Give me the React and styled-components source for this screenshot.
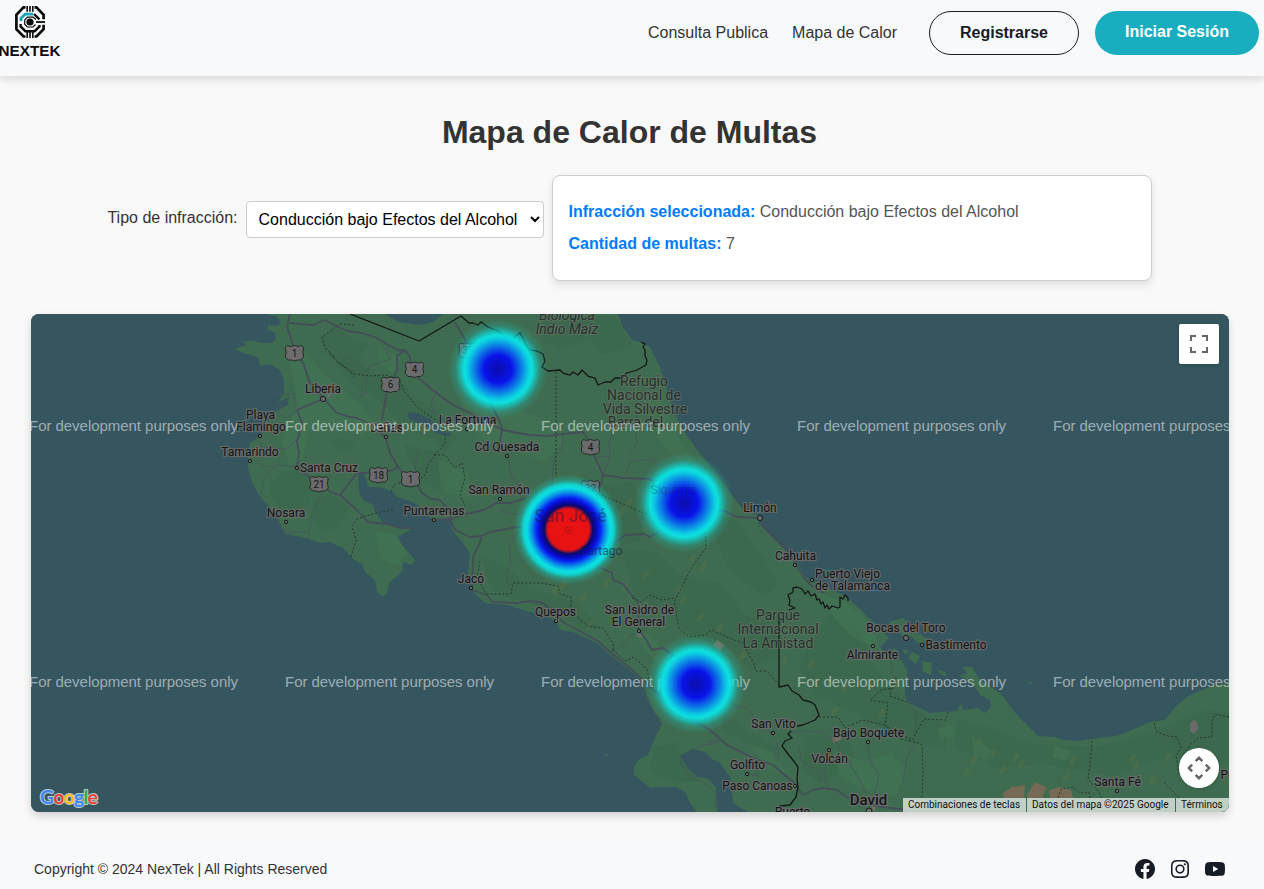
import React from "react";
import styled, { createGlobalStyle } from "styled-components";
import { BiLogoFacebookCircle, BiLogoInstagram, BiLogoYoutube } from "react-icons/bi";

const GlobalStyle = createGlobalStyle`
  *, *::before, *::after { box-sizing: border-box; }
  body {
    margin: 0;
    background: #f9f9f9;
    color: #333;
    font-family: "Liberation Sans", Arial, sans-serif;
    font-size: 16px;
  }
`;

const Page = styled.div`
  display: flex;
  flex-direction: column;
  height: 889px;
  overflow: hidden;
`;

const Header = styled.header`
  display: flex;
  justify-content: space-between;
  align-items: flex-start;
  height: 76px;
  flex: none;
  padding-right: 5px;
  background: #f8f9fb;
  box-shadow: 0 4px 8px rgba(0, 0, 0, 0.12);
`;

const LogoMark = styled.svg`
  display: block;
  width: 62px;
  height: 60px;
`;

const Nav = styled.nav`
  display: flex;
  align-items: center;
  height: 44px;
  margin-top: 11px;
`;

const NavLink = styled.a`
  margin-right: ${(p) => p.$gap}px;
  color: #333;
  line-height: 20px;
`;

const PillButton = styled.button`
  width: ${(p) => p.$width}px;
  height: 44px;
  padding: 0 0 ${(p) => (p.$primary ? 3 : 1)}px;
  border: ${(p) => (p.$primary ? "none" : "1px solid #161b26")};
  border-radius: 22px;
  background: ${(p) => (p.$primary ? "#1aadc0" : "transparent")};
  color: ${(p) => (p.$primary ? "#fff" : "#161b26")};
  font: bold 16px "Liberation Sans", Arial, sans-serif;
  & + & { margin-left: 16px; }
`;

const Main = styled.main`
  width: 1260px;
  flex: none;
  padding: 0 31px 24px;
`;

const Title = styled.h1`
  margin: 38px 1px 25px 0;
  text-align: center;
  font-size: 32px;
  line-height: 36px;
  color: #333;
`;

const Filters = styled.div`
  display: flex;
  justify-content: center;
  align-items: flex-start;
  height: 106px;
  padding-right: 1px;
`;

const FieldLabel = styled.label`
  margin: 34px 8px 0 0;
  line-height: 18px;
`;

const Select = styled.select`
  width: 298px;
  height: 37px;
  margin: 26px 8px 0 0;
  padding: 8px;
  border: 1px solid #ccc;
  border-radius: 4px;
  background: #fff;
  color: #000;
  font: 16px "Liberation Sans", Arial, sans-serif;
`;

const InfoCard = styled.section`
  width: 600px;
  height: 106px;
  padding: 20px 16px;
  border: 1px solid #ccc;
  border-radius: 8px;
  background: #fff;
  box-shadow: 0 4px 8px rgba(0, 0, 0, 0.1);
`;

const InfoLine = styled.p`
  margin: 0;
  line-height: 32px;
  color: #555;
  strong { color: #007bff; }
`;

const MapFrame = styled.section`
  position: relative;
  height: 498px;
  margin-top: 33px;
  border-radius: 8px;
  overflow: hidden;
  background: #35565f;
`;

const MapShadow = styled.div`
  border-radius: 8px;
  box-shadow: 0 4px 8px rgba(0, 0, 0, 0.16);
`;

const MapDrawing = styled.svg`
  display: block;
  width: 1198px;
  height: 498px;
`;

const MapControl = styled.button`
  position: absolute;
  right: 10px;
  top: ${(p) => p.$top}px;
  display: flex;
  align-items: center;
  justify-content: center;
  width: 40px;
  height: 40px;
  padding: 0;
  border: 0;
  border-radius: ${(p) => (p.$round ? "50%" : "2px")};
  background: #fff;
  box-shadow: 0 1px 4px -1px rgba(0, 0, 0, 0.3);
`;

const Attribution = styled.div`
  position: absolute;
  right: 0;
  bottom: 0;
  display: flex;
  gap: 1px;
  height: 14px;
`;

const AttributionItem = styled.span`
  width: ${(p) => p.$width}px;
  padding-left: 5px;
  background: rgba(245, 245, 245, 0.72);
  color: #111;
  font: 10px/14px Roboto, sans-serif;
  white-space: nowrap;
`;

const Footer = styled.footer`
  display: flex;
  justify-content: space-between;
  align-items: center;
  flex: 1;
  padding: 13px 37px 0 34px;
  background: #f8f9fb;
  font-size: 14px;
`;

const SocialLinks = styled.div`
  display: flex;
  gap: 11px;
  color: #161b26;
`;

const LAND =
  "M267 314L277 317 281 322 278 326 268 325 267 329 275 333 276 339 272 343 260 343 255 341 243 341 247 345 235 349 243 353 258 357 260 366 270 364 280 370 284 380 284 393 278 403 282 400 288 398 288 405 278 410 275 413 270 420 263 425 260 437 250 443 248 453 248 468 252 482 260 497 270 507 278 520 285 534 307 538 320 543 330 542 343 548 353 559 362 564 365 572 375 580 377 592 382 596 386 595 390 582 402 572 403 562 412 565 415 560 402 545 398 537 413 528 397 528 383 523 375 512 373 505 363 500 359 492 358 472 363 472 365 477 369 487 380 487 393 492 397 497 413 502 425 510 430 518 450 521 452 530 463 543 470 553 468 575 473 592 485 603 507 605 530 612 547 615 557 623 560 630 573 632 597 643 610 655 627 668 643 682 647 697 653 710 662 723 655 738 648 755 638 760 634 768 634 775 650 788 655 787 677 787 685 792 690 803 697 812 717 812 716 787 707 778 697 777 687 767 680 756 692 749 705 752 712 759 720 763 730 777 733 803 748 812 1229 812 1229 682 1210 687 1190 695 1177 705 1165 720 1150 722 1120 735 1093 739 1077 741 1063 740 1055 737 1038 736 1017 715 1000 693 980 680 972 667 963 667 967 674 960 675 975 687 980 695 990 700 991 707 985 713 978 708 963 710 961 703 957 711 930 713 907 702 905 693 907 670 901 660 890 657 880 647 889 638 878 627 863 612 847 597 817 583 805 577 797 563 785 550 767 532 758 523 760 517 742 508 733 497 720 477 697 450 683 430 673 410 667 390 662 373 655 357 650 347 640 342 632 340 623 327 618 314Z";

const LAKES = [
  "M385 314L398 322 420 325 433 322 443 314Z",
  "M407 412L418 413 430 419 442 432 451 433 449 437 436 433 424 425 409 419Z",
  "M281 401L290 397 287 403 280 407Z",
];

const ISLANDS = [
  "M889 622L903 618 910 625 917 636 904 637 896 630Z",
  "M911 636L920 634 932 642 918 643Z",
  "M912 652L920 656 916 664 908 658Z",
  "M922 661L932 663 931 675 923 672Z",
  "M937 669L945 672 947 677 940 674Z",
  "M902 649L909 651 905 655Z",
  "M893 648L898 650 897 654 892 653Z",
  "M1028 683L1032 684 1030 681Z",
  "M605 754L609 754 606 756Z",
];

const DARK_PATCHES = [
  "M320 337L338 328 354 340 370 344 359 357 370 379 350 372 338 360 324 353Z",
  "M328 442L340 437 352 442 355 450 339 452Z",
  "M270 484L283 472 302 470 313 482 309 503 296 514 281 510 272 498Z",
  "M313 501L332 493 349 507 339 527 323 534 312 520Z",
  "M336 362L349 356 381 377 401 379 415 398 440 412 457 439 445 452 426 436 400 423 380 401 350 384Z",
  "M403 445L436 452 452 472 443 492 420 481Z",
  "M545 316L615 316 634 348 602 354 588 339 560 351 543 341Z",
  "M580 474L604 486 631 481 645 511 640 541 614 546 597 506Z",
  "M621 548L658 552 681 575 720 583 744 614 776 627 777 658 749 668 725 645 694 637 662 610 635 596Z",
  "M481 555L507 567 529 588 575 601 601 630 580 627 547 609 515 599 491 590Z",
  "M705 512L735 520 759 551 778 583 766 598 728 569Z",
  "M655 747L676 742 684 758 697 781 673 783 649 772Z",
  "M830 613L860 628 873 665 906 704 944 725 947 751 901 739 856 714 815 696 798 665Z",
  "M958 719L993 728 1034 744 1096 747 1155 731 1206 709 1229 713 1229 762 1161 758 1113 776 1043 764 997 768 954 748Z",
  "M724 716L756 735 782 749 778 761 747 744 721 730Z",
  "M805 735L850 738 854 763 822 783 803 772Z",
];

const LIGHT_PATCHES = [
  "M289 356L306 352 326 376 361 404 374 425 362 437 334 423 309 430 303 458 289 466 282 438 298 405Z",
  "M378 347L402 358 393 374 379 363Z",
  "M459 400L505 405 546 420 566 438 545 462 516 451 482 440Z",
  "M438 459L468 473 471 500 441 491Z",
  "M645 390L663 401 678 437 705 477 684 470 658 437Z",
  "M375 531L395 534 407 553 397 566 381 559Z",
  "M634 630L651 635 675 668 661 671 645 649Z",
  "M815 592L844 601 873 626 879 649 852 637 831 614Z",
  "M833 749L864 762 892 752 908 770 895 796 863 789 839 776Z",
  "M937 728L953 726 955 737 941 739Z",
  "M971 735L991 750 988 762 974 755Z",
  "M1055 746L1072 751 1066 761 1052 757Z",
  "M750 744L771 751 789 774 771 772Z",
];

const RELIEF = [
  [655, 472], [663, 490], [626, 503], [619, 512], [690, 558], [700, 567], [643, 574], [604, 583],
  [552, 590], [580, 598], [587, 625], [676, 590], [680, 600], [716, 628], [741, 655], [781, 661],
  [783, 645], [724, 664], [738, 656], [808, 665], [827, 681], [832, 711], [842, 688], [879, 713],
  [976, 742], [990, 754], [971, 760], [1013, 758], [1018, 764], [1063, 778], [1129, 759], [1150, 780],
  [1165, 757], [1133, 765], [1070, 760], [1000, 770], [963, 772], [622, 588], [560, 586], [697, 618],
];

const MAIN_ROADS = [
  "M290 314L287 327 293 345 303 363 310 383 323 398 337 413 350 417 357 418 372 425 385 437 388 446 390 453 398 467 405 475 417 483 422 493 431 499 440 500 447 508 451 517 450 520 455 530 470 537 481 536 490 532 517 527 545 530 569 530 589 541 597 566 612 573 613 580 623 584 630 593 638 602 639 630 645 638 652 650 663 648 674 656 695 682",
  "M290 323L313 325 325 320 338 327 348 331 362 333 377 338 390 346 398 350 405 350 410 357 413 373 430 388 453 405 470 413 490 424 503 430 518 433 530 435 547 436 563 434 583 432 591 443 593 453 603 475 623 478 650 479 663 490 684 502 717 510 725 511 737 517 760 518",
  "M405 350L397 356 397 370 387 390 382 420",
  "M455 322L465 340 474 350 488 397 502 427 500 443",
  "M323 399L297 410 302 423 297 442 299 453 297 467",
  "M299 469L309 477 319 482 330 492 340 495 350 482 357 473 378 473 390 471 398 467",
  "M340 495L357 510 368 522 387 524 400 528 413 528",
  "M432 520L452 519 466 514 484 510 496 503 510 503 526 498",
  "M482 537L478 547 473 557 472 590 487 595 493 602 517 603 530 601 543 603 563 622 587 635 598 641 610 652 630 668 643 680 660 696 690 718 710 730 727 745 753 758 773 765 793 782 799 790 803 795 813 790 823 788 837 790 847 797 865 804 883 807 907 810",
  "M760 518L767 530 787 550 795 563 805 579 812 586 824 593",
  "M604 546L617 541 625 535 645 534 650 537 664 529",
  "M603 475L601 485 588 502 569 525",
];

const MINOR_ROADS = [
  "M274 393L285 395 294 393 295 412 287 418 279 413 281 404",
  "M260 434L260 446 269 448 286 449 293 443 302 435",
  "M256 460L262 466 272 467 278 465 297 467",
  "M276 466L264 478 262 489 261 498 275 514 284 532 308 532 309 539",
  "M322 492L316 505 312 513 309 532",
  "M384 348L391 359 369 366 366 378 362 386 361 397 366 391 368 379",
  "M437 390L431 403 434 414",
  "M417 453L414 478 421 492",
  "M508 458L511 474 518 486 530 497",
  "M563 434L562 448 554 458 552 483",
  "M603 475L610 457 594 456",
  "M610 457L609 443 614 426",
  "M626 476L630 462 643 460 654 459 657 466 645 475 642 480",
  "M630 452L637 443 634 424 638 414",
  "M500 510L515 515 532 510",
  "M518 530L509 548 511 563 506 575 509 589",
  "M609 652L620 648 633 633",
  "M707 742L721 740 727 745",
  "M693 750L702 745 713 744 721 741",
  "M681 755L681 764 691 777 703 782 716 792 715 808",
  "M727 700L738 707 747 708 753 715 753 726 770 732 777 742 778 761",
  "M788 733L803 731 820 732 835 741 843 752 860 781 872 805",
  "M829 750L824 773 828 788",
  "M868 744L870 761 879 775 872 803",
  "M799 748L802 761 821 773 819 782",
  "M890 657L895 688 910 704 916 713 915 744 907 758 903 780",
  "M760 774L752 776 759 771",
  "M765 518L758 528 765 534",
];

const DISTRICTS = [
  "M354 325L340 324 322 337 325 347 336 361 348 369 354 377",
  "M330 353L341 365 354 374 370 376 385 375 399 379 404 391 417 407 434 419 445 428 445 444 434 456 427 466 426 474 418 481 406 480 394 485 390 494",
  "M434 455L445 455 455 468 462 463 465 478 460 495 465 506",
  "M351 557L356 540 352 526 357 519 376 513 393 510",
  "M556 372L556 477",
  "M480 561L477 577 486 594 511 594 513 583 541 583 558 586 560 594 571 597 571 612 588 626 603 628 613 643 613 650",
  "M613 650L625 661 634 657 647 669 650 684",
  "M590 490L623 504 658 519 687 522",
  "M705 532L706 548 692 567 674 602 679 628 689 637 705 635 712 630 729 638 743 643 754 664 756 671 767 671 779 685",
  "M632 598L641 602 650 595 661 600 674 598",
  "M819 717L838 717 845 728 862 720 885 725 900 739 918 743 922 745 923 773 922 798",
  "M948 712L946 720 924 719 912 740 885 726 888 703 870 700 881 690 894 688 896 677",
  "M907 702L890 696 892 680",
  "M1154 723L1157 732 1168 736 1177 737 1181 748 1176 756 1179 774",
  "M1229 717L1215 714 1212 722 1212 737 1198 738 1190 745 1182 757",
  "M1092 741L1090 766 1088 779 1099 792 1104 805",
  "M1164 782L1179 798",
  "M1058 798L1061 789 1073 787 1080 793 1089 792 1090 798",
];

const BORDERS = [
  "M350 314L419 341 461 316 469 323 473 323 478 325 481 322 488 327 498 331 505 337 513 338 520 333 524 340 526 345 530 350 537 351 543 354 545 361 542 367 548 371 560 370 563 373 570 375 573 372 578 375 582 370 588 376 595 378 598 385 605 382 611 382 615 378 621 378 627 373 637 370 646 365 647 360 645 356 645 350 643 347 645 344 641 342",
  "M848 601L848 598 845 595 843 599 840 597 840 607 838 608 832 606 829 609 827 605 825 608 823 602 821 604 819 599 817 600 815 594 811 596 808 591 805 594 802 589 797 587 793 588 793 592 788 595 790 601 789 605 795 608 789 610",
  "M779 615L779 687 784 686 788 685 792 691 799 695 803 700 811 702 815 705 819 715 815 720 803 725 797 726",
  "M791 731L788 734 792 738 785 741 782 746 788 754 793 760 798 767 797 779 798 787 796 797 790 805 780 806 777 809",
];

const LABELS = [
  [323, 393, "Liberia"],
  [260.5, 419, "Playa"],
  [261, 431, "Flamingo"],
  [250, 456, "Tamarindo"],
  [329, 472, "Santa Cruz"],
  [286, 517, "Nosara"],
  [386, 432, "Cañas"],
  [467.5, 424, "La Fortuna"],
  [507, 451, "Cd Quesada"],
  [499, 494, "San Ramón"],
  [434, 515, "Puntarenas"],
  [471, 583, "Jacó"],
  [555.5, 616, "Quepos"],
  [639.5, 614, "San Isidro de"],
  [638.5, 626, "El General"],
  [760, 512, "Limón"],
  [795.5, 560, "Cahuita"],
  [847.5, 578, "Puerto Viejo"],
  [852.5, 590, "de Talamanca"],
  [906, 632, "Bocas del Toro"],
  [956, 649, "Bastimento"],
  [872.5, 659, "Almirante"],
  [773.5, 728, "San Vito"],
  [868.5, 737, "Bajo Boquete"],
  [829.5, 763, "Volcán"],
  [747.5, 769, "Golfito"],
  [757.5, 790, "Paso Canoas"],
  [792.5, 816, "Puerto"],
  [1117.5, 786, "Santa Fé"],
  [1227.5, 779, "Pe"],
];

const PARK_LABELS = [
  [644, 386, "Refugio"],
  [644, 400, "Nacional de"],
  [645, 414, "Vida Silvestre"],
  [641, 427, "Barra del..."],
  [778, 620, "Parque"],
  [778, 634, "Internacional"],
  [778, 648, "La Amistad"],
];

const TOWNS = [
  [323, 399, 2.6], [260, 436], [250, 461], [297, 468], [286, 522], [386, 437], [467, 429],
  [507, 456], [500, 499], [434, 520], [471, 588], [556, 621], [639, 631], [760, 518, 2.6],
  [795, 565], [812, 580], [906, 638, 2.6], [922, 645], [873, 646], [773, 733], [868, 742],
  [829, 750], [747, 774], [795, 786], [869, 811, 3], [1117, 791], [675, 498],
];

const SHIELDS = [
  [294.5, 353, "1"], [390.5, 384.5, "6"], [414.5, 369.5, "4"], [378.5, 475, "18"], [410.5, 479, "1"],
  [319, 484, "21"], [590.5, 447, "4"], [468, 350.5, "35"], [590.5, 488, "32"], [663, 517, "10"],
  [680, 663, "2"],
];

const HEAT_POINTS = [[498, 369], [684, 503], [696, 684]];

const WATERMARKS = [29, 285, 541, 797, 1053].flatMap((x) => [[x, 431], [x, 687]]);

const GOOGLE_LETTERS = [
  ["G", "#4285f4"], ["o", "#ea4335"], ["o", "#fbbc04"], ["g", "#4285f4"], ["l", "#34a853"], ["e", "#ea4335"],
];

function Shield({ x, y, children }) {
  const w = 9.3;
  return (
    <g transform={`translate(${x} ${y})`}>
      <path
        d={`M${-w + 2} -7.5L-4 -6.5 0 -7.5 4 -6.5 ${w - 2} -7.5 ${w} -5 ${w - 1} -1 ${w} 4 ${w - 3} 7 3 7 0 8 -3 7 ${-w + 3} 7 ${-w} 4 ${-w + 1} -1 ${-w} -5Z`}
        fill="#6b6b6d"
        stroke="#262a29"
      />
      <text y="3.7" textAnchor="middle" fontSize="10" fill="#151515" fontFamily="Roboto, sans-serif">
        {children}
      </text>
    </g>
  );
}

function HeatMap() {
  return (
    <MapDrawing viewBox="31 314 1198 498">
      <defs>
        <clipPath id="land"><path d={LAND} /></clipPath>
        <radialGradient id="heat">
          <stop offset="0" stopColor="#0a0cb4" stopOpacity=".97" />
          <stop offset=".1" stopColor="#090bc4" stopOpacity=".97" />
          <stop offset=".28" stopColor="#070ff0" stopOpacity=".96" />
          <stop offset=".46" stopColor="#0878f0" stopOpacity=".93" />
          <stop offset=".62" stopColor="#08d8ec" stopOpacity=".93" />
          <stop offset=".68" stopColor="#08ebe9" stopOpacity=".92" />
          <stop offset=".76" stopColor="#0cdcda" stopOpacity=".66" />
          <stop offset=".86" stopColor="#12c8c0" stopOpacity=".25" />
          <stop offset="1" stopColor="#12c8c0" stopOpacity="0" />
        </radialGradient>
        <radialGradient id="heatHigh">
          <stop offset="0" stopColor="#e91212" />
          <stop offset=".37" stopColor="#e91212" />
          <stop offset=".41" stopColor="#751246" />
          <stop offset=".44" stopColor="#0c0a66" />
          <stop offset=".52" stopColor="#0809c8" />
          <stop offset=".58" stopColor="#0824f2" />
          <stop offset=".69" stopColor="#08a5ee" stopOpacity=".95" />
          <stop offset=".76" stopColor="#08e6e9" stopOpacity=".95" />
          <stop offset=".82" stopColor="#08e6e4" stopOpacity=".85" />
          <stop offset=".9" stopColor="#12c8c0" stopOpacity=".35" />
          <stop offset="1" stopColor="#12c8c0" stopOpacity="0" />
        </radialGradient>
      </defs>

      <rect x="31" y="314" width="1198" height="498" fill="#35565f" />
      <path d={LAND} fill="#3f6c50" />
      <g clipPath="url(#land)">
        {DARK_PATCHES.map((d) => <path key={d} d={d} fill="#3a6449" opacity=".45" />)}
        {LIGHT_PATCHES.map((d) => <path key={d} d={d} fill="#437656" opacity=".5" />)}
        {RELIEF.map(([x, y]) => (
          <path key={`${x}-${y}`} d={`M${x} ${y}l4 -5 3 2 -3 6 -4 2z`} fill="#58734a" opacity=".4" />
        ))}
        <path d="M1003 793L1012 787 1025 785 1024 798H1004ZM1027 795L1035 782 1046 787 1043 798 1028 798ZM1049 790L1060 787 1071 790 1073 798H1050Z" fill="#766955" />
        <path d="M831 739L839 734 842 739 834 743ZM713 645L718 640 724 645 720 651ZM870 804L876 807 874 812Z" fill="#766f5f" />
        <path d="M1190 724L1193 720 1197 722 1198 729 1194 734 1190 731ZM326 392L332 393 328 399ZM638 630L645 637 637 637Z" fill="#6a6a6b" />
      </g>
      {LAKES.map((d) => <path key={d} d={d} fill="#35565f" />)}
      {ISLANDS.map((d) => <path key={d} d={d} fill="#3f6c50" />)}

      <g fill="none" strokeLinejoin="round">
        {MINOR_ROADS.map((d) => <path key={d} d={d} stroke="#46585b" strokeWidth="1" />)}
        {MAIN_ROADS.map((d) => <path key={d} d={d} stroke="#454d59" strokeWidth="1.8" />)}
        {DISTRICTS.map((d) => <path key={d} d={d} stroke="#27382d" strokeWidth="1" strokeDasharray="2 2" />)}
        {BORDERS.map((d) => <path key={d} d={d} stroke="#141716" strokeWidth="1.3" />)}
      </g>

      {SHIELDS.map(([x, y, n]) => <Shield key={`${x}-${y}`} x={x} y={y}>{n}</Shield>)}
      {TOWNS.map(([x, y, r = 1.7]) => (
        <circle key={`${x}-${y}`} cx={x} cy={y} r={r} fill="#6b6b6b" stroke="#191b1b" strokeWidth="1" />
      ))}

      <g fontFamily="Roboto, sans-serif" textAnchor="middle" paintOrder="stroke" strokeLinejoin="round">
        <g fontSize="12" fill="#121415" stroke="#6b6c6d" strokeOpacity=".85" strokeWidth="2.6">
          {LABELS.map(([x, y, t]) => <text key={t} x={x} y={y}>{t}</text>)}
        </g>
        <g fontSize="14" fill="#27302b" stroke="#69736c" strokeOpacity=".65" strokeWidth="2">
          {PARK_LABELS.map(([x, y, t]) => <text key={t} x={x} y={y}>{t}</text>)}
          <text x="567" y="320" fontStyle="italic">Biológica</text>
          <text x="567" y="334" fontStyle="italic">Indio Maíz</text>
        </g>
        <text x="868.5" y="805" fontSize="15" fontWeight="500" fill="#151718" stroke="#6b6c6d" strokeWidth="2.4">David</text>
      </g>

      <g fontFamily='"Liberation Sans", Arial, sans-serif' fontSize="15" fill="#fff" fillOpacity=".52">
        {WATERMARKS.map(([x, y]) => (
          <text key={`${x}-${y}`} x={x} y={y} textLength="209">For development purposes only</text>
        ))}
      </g>

      {HEAT_POINTS.map(([x, y]) => <circle key={`${x}-${y}`} cx={x} cy={y} r="50" fill="url(#heat)" />)}
      <circle cx="568.5" cy="529.5" r="55" fill="url(#heatHigh)" />
      <g fill="none" stroke="#a51414" opacity=".75">
        <circle cx="569" cy="530" r="3.5" />
        <circle cx="569" cy="530" r="1" />
      </g>
      <g fontFamily="Roboto, sans-serif" textAnchor="middle" fill="#0d1446">
        <text x="570.5" y="522" fontSize="17.5" fontWeight="500" opacity=".36">San José</text>
        <text x="601" y="555" fontSize="12" opacity=".6">Cartago</text>
        <text x="674" y="494" fontSize="12" opacity=".28">Siquirres</text>
      </g>

      <text
        x="40" y="804" fontSize="19.5" fontWeight="700" textLength="58" lengthAdjust="spacing"
        fontFamily="Lato, sans-serif" paintOrder="stroke" stroke="#bccacd" strokeWidth="2" strokeLinejoin="round"
      >
        {GOOGLE_LETTERS.map(([c, fill], i) => <tspan key={i} fill={fill}>{c}</tspan>)}
      </text>
    </MapDrawing>
  );
}

function Logo() {
  return (
    <LogoMark viewBox="0 0 62 60" role="img">
      <g fill="none" stroke="#0b0b0b" strokeWidth="2.7">
        <path d="M25.5 7.3L23.5 7.3 16.4 14.8V29.2L23.5 36.5H25.5" />
        <path d="M34.5 7.3H36.5L43.6 14.8V19.3M43.6 24.7V29.2L36.5 36.5H34.5" />
        <path d="M34 14L39.5 19.3M20.6 24V26.4L25.4 31.2H34.7L39.5 26.4V25" strokeWidth="2.4" />
        <path d="M27.2 6V11.8M30 6V11.8M32.8 6V11.8M27.2 32V38M30 32V38M32.8 32V38" strokeWidth="1.6" />
        <path d="M36 22H45" strokeWidth="1.8" />
        <path d="M36 19.5L33.2 17.2H27.5L24.7 20V24.2L27.3 27H33L35.5 24.5" strokeWidth="1.2" />
      </g>
      <path d="M21 21V18.2L25.3 14.2H33" fill="none" stroke="#1aa3bb" strokeWidth="2.7" />
      <circle cx="30" cy="22" r="3.6" fill="#0b0b0b" />
      <text x="-1.5" y="55.5" fontSize="15.3" fontWeight="bold" fill="#0b0b0b" textLength="62" lengthAdjust="spacingAndGlyphs">
        NEXTEK
      </text>
    </LogoMark>
  );
}

export default function App() {
  return (
    <>
      <GlobalStyle />
      <Page>
        <Header>
          <Logo />
          <Nav>
            <NavLink $gap={24}>Consulta Publica</NavLink>
            <NavLink $gap={32}>Mapa de Calor</NavLink>
            <PillButton $width={150}>Registrarse</PillButton>
            <PillButton $width={164} $primary>Iniciar Sesión</PillButton>
          </Nav>
        </Header>

        <Main>
          <Title>Mapa de Calor de Multas</Title>
          <Filters>
            <FieldLabel htmlFor="tipo">Tipo de infracción:</FieldLabel>
            <Select id="tipo">
              <option>Conducción bajo Efectos del Alcohol</option>
            </Select>
            <InfoCard>
              <InfoLine><strong>Infracción seleccionada:</strong> Conducción bajo Efectos del Alcohol</InfoLine>
              <InfoLine><strong>Cantidad de multas:</strong> 7</InfoLine>
            </InfoCard>
          </Filters>
          <MapShadow>
            <MapFrame>
              <HeatMap />
              <MapControl $top={10} aria-label="Pantalla completa">
                <svg width="18" height="18" viewBox="0 0 18 18" fill="#666">
                  <path d="M0 0v6h2V2h4V0H0zm16 0h-4v2h4v4h2V0h-2zm0 16h-4v2h6v-6h-2v4zM2 12H0v6h6v-2H2v-4z" />
                </svg>
              </MapControl>
              <MapControl $top={434} $round aria-label="Controles de la cámara">
                <svg width="24" height="24" viewBox="0 0 24 24" fill="none" stroke="#666" strokeWidth="2.4">
                  <path d="M8.6 5.2L12 1.8 15.4 5.2M8.6 18.8L12 22.2 15.4 18.8M5.2 8.6L1.8 12 5.2 15.4M18.8 8.6L22.2 12 18.8 15.4" />
                </svg>
              </MapControl>
              <Attribution>
                <AttributionItem $width={123}>Combinaciones de teclas</AttributionItem>
                <AttributionItem $width={148}>Datos del mapa ©2025 Google</AttributionItem>
                <AttributionItem $width={53}>Términos</AttributionItem>
              </Attribution>
            </MapFrame>
          </MapShadow>
        </Main>

        <Footer>
          <span>Copyright © 2024 NexTek | All Rights Reserved</span>
          <SocialLinks>
            <BiLogoFacebookCircle size={24} />
            <BiLogoInstagram size={24} />
            <BiLogoYoutube size={24} />
          </SocialLinks>
        </Footer>
      </Page>
    </>
  );
}
